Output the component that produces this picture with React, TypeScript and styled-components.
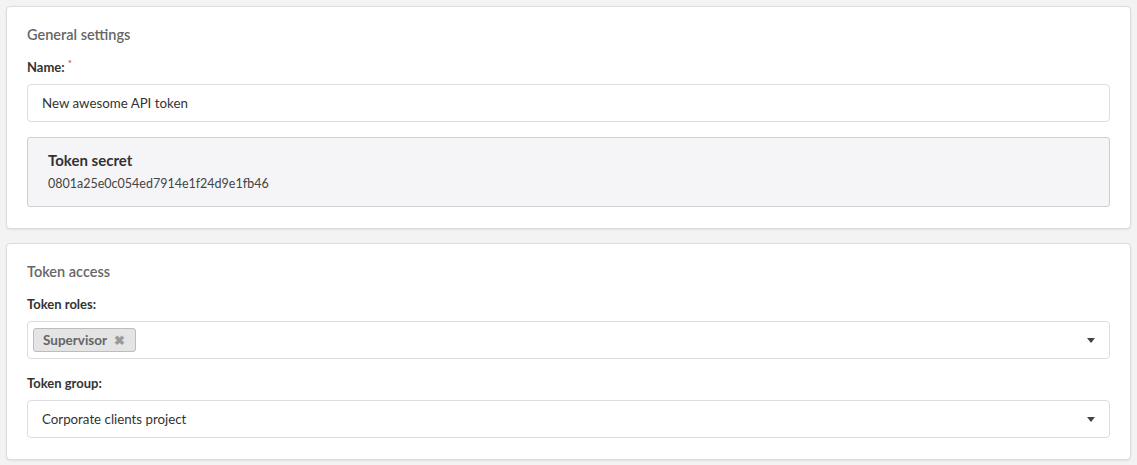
import React from 'react';
import styled, { createGlobalStyle } from 'styled-components';

const GlobalStyle = createGlobalStyle`
  html, body {
    margin: 0;
    padding: 0;
    background: #f3f3f3;
    font-family: Lato, "Open Sans", sans-serif;
    color: #333;
  }
`;

const App: React.FC = () => {
  return (
    <Page>
      <GlobalStyle />
      <Card>
        <CardTitle>General settings</CardTitle>
        <Field>
          <Label>
            Name: <Required>*</Required>
          </Label>
          <Input>New awesome API token</Input>
        </Field>
        <SecretBox>
          <SecretTitle>Token secret</SecretTitle>
          <SecretValue>0801a25e0c054ed7914e1f24d9e1fb46</SecretValue>
        </SecretBox>
      </Card>

      <Card>
        <CardTitle>Token access</CardTitle>
        <Field>
          <Label>Token roles:</Label>
          <Select $compact>
            <Tag>
              Supervisor <TagRemove>✖</TagRemove>
            </Tag>
            <Caret />
          </Select>
        </Field>
        <Field>
          <Label>Token group:</Label>
          <Select>
            <span>Corporate clients project</span>
            <Caret />
          </Select>
        </Field>
      </Card>
    </Page>
  );
};

export default App;

const Page = styled.div`
  display: flex;
  flex-direction: column;
  gap: 14px;
  padding: 6px;
`;

const Card = styled.div`
  background: #fff;
  border: 1px solid #dcdcdc;
  border-radius: 4px;
  box-shadow: 0 1px 2px rgba(0, 0, 0, 0.08);
  padding: 19px 20px 21px 20px;
  display: flex;
  flex-direction: column;
  gap: 16px;
`;

const CardTitle = styled.div`
  font-size: 14.5px;
  font-weight: 600;
  color: #666;
  line-height: 18px;
  margin-bottom: -1px;
`;

const Field = styled.div`
  display: flex;
  flex-direction: column;
  gap: 8px;
`;

const Label = styled.div`
  font-size: 13px;
  font-weight: 700;
  color: #333;
  line-height: 17px;
  height: 17px;
`;

const Required = styled.span`
  position: relative;
  top: -5px;
  line-height: 0;
  color: #c0392b;
  font-size: 10px;
  font-weight: 400;
`;

const Input = styled.div`
  height: 36px;
  border: 1px solid #ddd;
  border-radius: 4px;
  padding: 0 14px;
  display: flex;
  align-items: center;
  font-size: 13.3px;
  color: #333;
`;

const SecretBox = styled.div`
  background: #f5f5f7;
  border: 1px solid #cfcfcf;
  border-radius: 3px;
  padding: 12px 20px 13px 20px;
  display: flex;
  flex-direction: column;
  gap: 4px;
  margin-top: -1px;
`;

const SecretTitle = styled.div`
  font-size: 15px;
  font-weight: 700;
  color: #333;
  line-height: 20px;
`;

const SecretValue = styled.div`
  font-size: 12.5px;
  color: #444;
  line-height: 19px;
`;

const Select = styled.div<{ $compact?: boolean }>`
  height: 36px;
  border: 1px solid #ddd;
  border-radius: 4px;
  padding: ${(p) => (p.$compact ? '0 14px 0 5px' : '0 14px')};
  display: flex;
  align-items: center;
  justify-content: space-between;
  font-size: 13.3px;
  color: #333;
`;

const Tag = styled.div`
  display: flex;
  align-items: center;
  gap: 7px;
  height: 22px;
  padding: 0 10px 0 9px;
  background: #e4e4e4;
  border: 1px solid #bdbdbd;
  border-radius: 3px;
  font-size: 13.5px;
  font-weight: 700;
  color: #666;
`;

const TagRemove = styled.span`
  font-size: 13px;
  color: #9a9a9a;
`;

const Caret = styled.span`
  width: 0;
  height: 0;
  border-left: 4px solid transparent;
  border-right: 4px solid transparent;
  border-top: 5px solid #444;
`;
